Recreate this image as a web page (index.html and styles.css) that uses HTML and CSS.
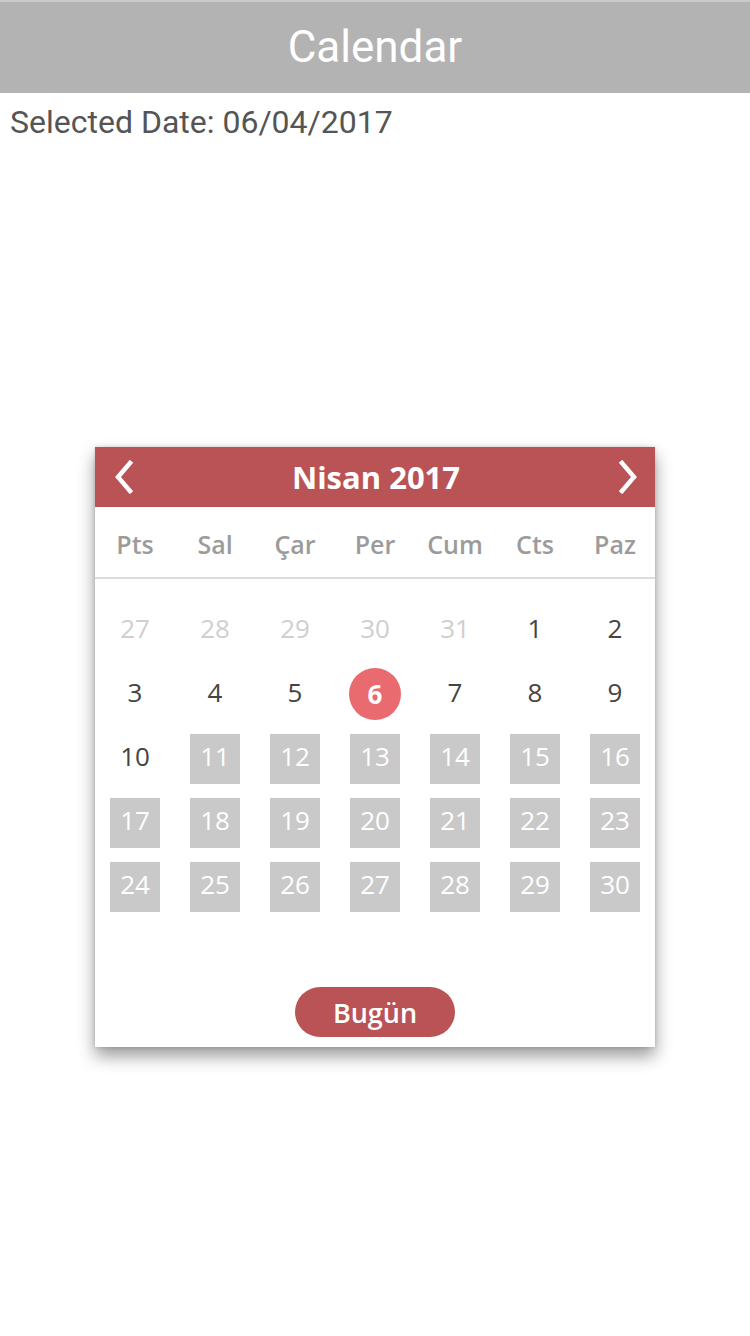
FILE: index.html
```html
<!DOCTYPE html>
<html lang="tr">
<head>
<meta charset="utf-8">
<title>Calendar</title>
<link rel="stylesheet" href="styles.css">
</head>
<body>
<div class="statusline"></div>
<header class="appbar">Calendar</header>
<p class="selected">Selected Date: 06/04/2017</p>
<main class="stage">
  <section class="cal">
    <div class="cal-head">
      <button class="nav" aria-label="Önceki ay">
        <svg width="24" height="34" viewBox="0 0 24 34"><path d="M17 3 L5 17 L17 31" fill="none" stroke="#fff" stroke-width="4.5" stroke-linecap="square"/></svg>
      </button>
      <h1 class="cal-title">Nisan 2017</h1>
      <button class="nav" aria-label="Sonraki ay">
        <svg width="24" height="34" viewBox="0 0 24 34"><path d="M7 3 L19 17 L7 31" fill="none" stroke="#fff" stroke-width="4.5" stroke-linecap="square"/></svg>
      </button>
    </div>
    <div class="weekdays">
      <span>Pts</span><span>Sal</span><span>Çar</span><span>Per</span><span>Cum</span><span>Cts</span><span>Paz</span>
    </div>
    <div class="days">
      <span class="d other">27</span><span class="d other">28</span><span class="d other">29</span><span class="d other">30</span><span class="d other">31</span><span class="d">1</span><span class="d">2</span>
      <span class="d">3</span><span class="d">4</span><span class="d">5</span><span class="d today"><b>6</b></span><span class="d">7</span><span class="d">8</span><span class="d">9</span>
      <span class="d">10</span><span class="d off">11</span><span class="d off">12</span><span class="d off">13</span><span class="d off">14</span><span class="d off">15</span><span class="d off">16</span>
      <span class="d off">17</span><span class="d off">18</span><span class="d off">19</span><span class="d off">20</span><span class="d off">21</span><span class="d off">22</span><span class="d off">23</span>
      <span class="d off">24</span><span class="d off">25</span><span class="d off">26</span><span class="d off">27</span><span class="d off">28</span><span class="d off">29</span><span class="d off">30</span>
      <span class="d"></span><span class="d"></span><span class="d"></span><span class="d"></span><span class="d"></span><span class="d"></span><span class="d"></span>
    </div>
    <div class="foot">
      <button class="today-btn">Bugün</button>
    </div>
  </section>
</main>
</body>
</html>
```

FILE: styles.css
```css
* { box-sizing: border-box; }
html, body { margin: 0; padding: 0; background: #fff; }
body { width: 750px; height: 1336px; overflow: hidden; font-family: Roboto, "Liberation Sans", sans-serif; }

.statusline { height: 2px; background: #cacaca; }
.appbar {
  height: 91px;
  background: #b3b3b3;
  color: #fff;
  font-family: Roboto, sans-serif;
  font-size: 44px;
  font-weight: 400;
  display: flex;
  align-items: center;
  justify-content: center;
  padding-bottom: 2px;
}
.selected {
  margin: 0;
  padding: 11px 0 0 10px;
  font-size: 32px;
  line-height: 36px;
  color: #555;
}

.stage {
  display: flex;
  justify-content: center;
  padding-top: 307px;
}
.cal {
  width: 560px;
  height: 600px;
  background: #fff;
  box-shadow: 0 9px 16px rgba(0,0,0,0.4), 0 0 4px rgba(0,0,0,0.15);
  font-family: "Open Sans", sans-serif;
  display: flex;
  flex-direction: column;
}
.cal-head {
  height: 60px;
  background: #b95356;
  display: flex;
  align-items: center;
  justify-content: space-between;
  padding: 0 13px 0 15px;
}
.nav {
  background: none;
  border: 0;
  padding: 0;
  width: 30px;
  height: 40px;
  display: flex;
  align-items: center;
  justify-content: center;
}
.cal-title {
  margin: 0;
  color: #fff;
  font-size: 31px;
  font-weight: 700;
  line-height: 1;
}
.weekdays {
  height: 72px;
  border-bottom: 2px solid #dcdcdc;
  display: grid;
  grid-template-columns: repeat(7, 80px);
  align-items: center;
  justify-items: center;
  color: #9b9b9b;
  font-size: 25px;
  font-weight: 600;
  padding-top: 4px;
}
.days {
  margin-top: 17px;
  display: grid;
  grid-template-columns: repeat(7, 80px);
  grid-auto-rows: 64px;
}
.d {
  display: flex;
  align-items: center;
  justify-content: center;
  font-size: 26px;
  color: #444;
}
.d.other { color: #cfcfcf; }
.d.off {
  color: #fff;
  background: linear-gradient(#c9c9c9, #c9c9c9) no-repeat center 10px / 50px 50px;
}
.d.today b {
  width: 52px;
  height: 52px;
  border-radius: 50%;
  background: #e96a6f;
  color: #fff;
  font-weight: 700;
  display: flex;
  align-items: center;
  justify-content: center;
  margin-top: 4px;
}
.foot {
  display: flex;
  justify-content: center;
  padding-top: 7px;
}
.today-btn {
  width: 160px;
  height: 50px;
  border: 0;
  border-radius: 25px;
  background: #b95356;
  color: #fff;
  font-family: "Open Sans", sans-serif;
  font-size: 27px;
  font-weight: 600;
  padding: 0;
}
```
